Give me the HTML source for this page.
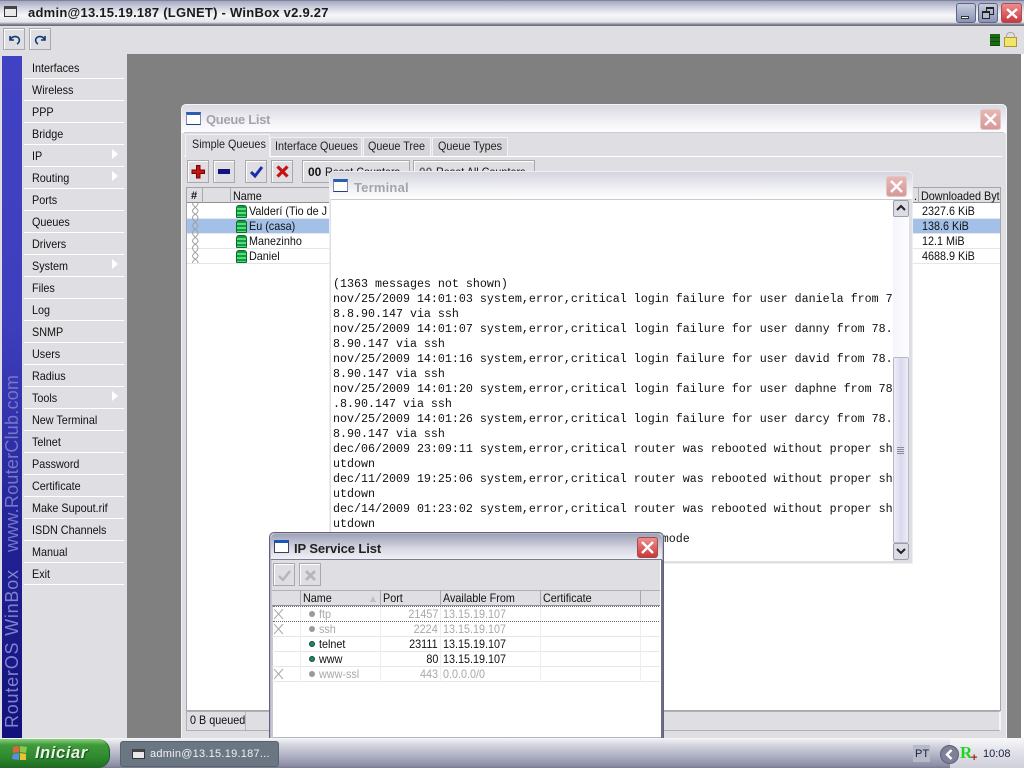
<!DOCTYPE html>
<html><head><meta charset="utf-8"><title>WinBox</title>
<style>
html,body{margin:0;padding:0;width:1024px;height:768px;overflow:hidden;background:#fff}
*{box-sizing:border-box}
body{font-family:"Liberation Sans",sans-serif;font-size:12px;color:#111;position:relative}
.a,.a *{position:absolute}
.a{position:absolute}
.t{white-space:nowrap;line-height:15px;height:15px;font-size:12px;transform:scaleX(.9);transform-origin:0 50%}
.r{transform-origin:100% 50%}
.n{transform:none}
.q{margin-top:1px}
.m{left:32px;white-space:nowrap;font-size:12px;line-height:14px;color:#111;transform:scaleX(.9);transform-origin:0 50%}
.sep{left:24px;width:100px;height:1px;background:#fff}
.arr{left:112px;width:0;height:0;border-left:6px solid #fff;border-top:5px solid transparent;border-bottom:5px solid transparent}
.btn{background:#dfdfe3;border:1px solid #a9a9ad;box-shadow:inset 1px 1px 0 #fff}
.tab{background:#d6d6da;border:1px solid #f2f2f4;border-bottom:0}
.x{border-radius:3px;border:1px solid #fff}
.mono{font-family:"Liberation Mono",monospace;font-size:11.67px;line-height:15px;height:15px;left:333px;margin-top:1px;white-space:pre;color:#111}
.row{height:1px;background:#e6e6e6}
.ic{width:11px;height:13px;background:repeating-linear-gradient(#119944 0 2px,#55dd77 2px 4px);border:1px solid #0a6a2a;border-radius:3px 3px 1px 1px}
.dot{width:6px;height:6px;border-radius:50%}
</style></head><body>

<!-- title bar -->
<div class="a" style="left:0;top:0;width:1024px;height:26px;background:linear-gradient(#5d6188 0,#a4a7bd 1px,#d2d4e0 8px,#f6f6fa 15px,#e4e5ec 22px,#6e7080 25px)"></div>
<div class="a" style="left:4px;top:6px;width:13px;height:11px;background:#e8e8e8;border:1px solid #333;border-top:3px solid #444"></div>
<div class="a" style="left:28px;top:5px;font-size:13px;font-weight:bold;line-height:16px;color:#1a1a1a;white-space:nowrap;letter-spacing:.25px">admin@13.15.19.187 (LGNET) - WinBox v2.9.27</div>
<div class="a" style="left:956px;top:3px;width:20px;height:20px;border-radius:3px;background:linear-gradient(#c7cde0,#8b93b4);border:1px solid #5d6585"><div style="left:4px;top:12px;width:8px;height:3px;background:#fff;border:1px solid #333"></div></div>
<div class="a" style="left:978px;top:3px;width:20px;height:20px;border-radius:3px;background:linear-gradient(#c7cde0,#8b93b4);border:1px solid #5d6585"><div style="left:7px;top:3px;width:8px;height:8px;border:1px solid #222;border-top-width:2px"></div><div style="left:3px;top:7px;width:8px;height:8px;border:1px solid #222;border-top-width:2px;background:#b5bbd0"></div></div>
<div class="a" style="left:1001px;top:3px;width:21px;height:20px;border-radius:3px;background:linear-gradient(#ef8d8d,#c8383f);border:1px solid #a84d50"><svg style="left:3px;top:3px" width="14" height="13"><path d="M2 2L12 11M12 2L2 11" stroke="#fff" stroke-width="2.4"/></svg></div>

<!-- toolbar -->
<div class="a" style="left:0;top:26px;width:1024px;height:28px;background:#dfdfe3"></div>
<div class="a btn" style="left:3px;top:28px;width:22px;height:22px"><svg style="left:3px;top:3px" width="15" height="15"><path d="M3 4v4h4M3.500 7.500C5 4 10 3.500 12 6.500C13 8.500 12 11 10 12" fill="none" stroke="#123a6e" stroke-width="1.600"/></svg></div>
<div class="a btn" style="left:29px;top:28px;width:22px;height:22px"><svg style="left:3px;top:3px" width="15" height="15"><path d="M12 4v4h-4M11.500 7.500C10 4 5 3.500 3 6.500C2 8.500 3 11 5 12" fill="none" stroke="#123a6e" stroke-width="1.600"/></svg></div>
<div class="a" style="left:990px;top:34px;width:10px;height:12px;background:repeating-linear-gradient(#1d6a14 0 3px,#0f4a0c 3px 4px)"></div>
<div class="a" style="left:1004px;top:37px;width:13px;height:10px;background:#f2e46a;border:1px solid #a89a30"></div>
<div class="a" style="left:1006px;top:32px;width:9px;height:6px;border:1px solid #a8a8a0;border-bottom:0;border-radius:4px 4px 0 0"></div>

<!-- sidebar -->
<div class="a" style="left:0;top:54px;width:127px;height:684px;background:#dfdfe3"></div>
<div class="a" style="left:2px;top:56px;width:20px;height:682px;background:linear-gradient(#4141c3 0,#3e3ebd 40%,#222296 70%,#12127c 100%)"></div>
<svg class="a" style="left:2px;top:56px" width="20" height="682"><text transform="translate(16,672) rotate(-90)" font-family="Liberation Sans" font-size="18" fill="#8282cc" textLength="158">RouterOS WinBox</text><text transform="translate(16,496) rotate(-90)" font-family="Liberation Sans" font-size="18" fill="#7777c8" textLength="177">www.RouterClub.com</text></svg>

<div class="a m" style="top:61px">Interfaces</div><div class="a sep" style="top:78px"></div>
<div class="a m" style="top:83px">Wireless</div><div class="a sep" style="top:100px"></div>
<div class="a m" style="top:105px">PPP</div><div class="a sep" style="top:122px"></div>
<div class="a m" style="top:127px">Bridge</div><div class="a sep" style="top:144px"></div>
<div class="a m" style="top:149px">IP</div><div class="a sep" style="top:166px"></div><div class="a arr" style="top:149px"></div>
<div class="a m" style="top:171px">Routing</div><div class="a sep" style="top:188px"></div><div class="a arr" style="top:171px"></div>
<div class="a m" style="top:193px">Ports</div><div class="a sep" style="top:210px"></div>
<div class="a m" style="top:215px">Queues</div><div class="a sep" style="top:232px"></div>
<div class="a m" style="top:237px">Drivers</div><div class="a sep" style="top:254px"></div>
<div class="a m" style="top:259px">System</div><div class="a sep" style="top:276px"></div><div class="a arr" style="top:259px"></div>
<div class="a m" style="top:281px">Files</div><div class="a sep" style="top:298px"></div>
<div class="a m" style="top:303px">Log</div><div class="a sep" style="top:320px"></div>
<div class="a m" style="top:325px">SNMP</div><div class="a sep" style="top:342px"></div>
<div class="a m" style="top:347px">Users</div><div class="a sep" style="top:364px"></div>
<div class="a m" style="top:369px">Radius</div><div class="a sep" style="top:386px"></div>
<div class="a m" style="top:391px">Tools</div><div class="a sep" style="top:408px"></div><div class="a arr" style="top:391px"></div>
<div class="a m" style="top:413px">New Terminal</div><div class="a sep" style="top:430px"></div>
<div class="a m" style="top:435px">Telnet</div><div class="a sep" style="top:452px"></div>
<div class="a m" style="top:457px">Password</div><div class="a sep" style="top:474px"></div>
<div class="a m" style="top:479px">Certificate</div><div class="a sep" style="top:496px"></div>
<div class="a m" style="top:501px">Make Supout.rif</div><div class="a sep" style="top:518px"></div>
<div class="a m" style="top:523px">ISDN Channels</div><div class="a sep" style="top:540px"></div>
<div class="a m" style="top:545px">Manual</div><div class="a sep" style="top:562px"></div>
<div class="a m" style="top:567px">Exit</div><div class="a sep" style="top:584px"></div>

<!-- MDI -->
<div class="a" style="left:127px;top:54px;width:897px;height:684px;background:#808080"></div>
<div class="a" style="left:1021px;top:54px;width:3px;height:684px;background:#fff"></div>

<!-- Queue window -->
<div class="a" style="left:181px;top:104px;width:826px;height:640px;background:#dfdfe3;border:1px solid #f4f4f6;border-radius:5px 5px 0 0">
  <div style="left:0;top:0;width:824px;height:28px;border-radius:5px 5px 0 0;background:linear-gradient(#d9dae2,#f6f6fa 70%,#fff)"></div>
</div>
<div class="a" style="left:186px;top:112px;width:15px;height:13px;background:#fff;border:1px solid #7a8ab4;border-top:3px solid #2a5fb0;border-bottom-color:#27407a"></div>
<div class="a" style="left:206px;top:112px;font-size:13px;font-weight:bold;color:#a3a3ab;line-height:16px;letter-spacing:-.3px">Queue List</div>
<div class="a x" style="left:980px;top:109px;width:21px;height:21px;background:linear-gradient(#e9b6b4,#d49a98);border-color:#e0c8c8"><svg style="left:2px;top:2px" width="15" height="15"><path d="M2 2L13 13M13 2L2 13" stroke="#fff" stroke-width="2.400"/></svg></div>

<div class="a" style="left:184px;top:132px;width:820px;height:1px;background:#c9c9cf"></div>
<div class="a tab" style="left:270px;top:137px;width:92px;height:20px"></div>
<div class="a tab" style="left:363px;top:137px;width:68px;height:20px"></div>
<div class="a tab" style="left:432px;top:137px;width:76px;height:20px"></div>
<div class="a" style="left:184px;top:156px;width:818px;height:1px;background:#fff"></div>
<div class="a tab" style="left:185px;top:134px;width:85px;height:23px;background:#dfdfe3"></div>
<div class="a t" style="left:192px;top:137px;color:#222">Simple Queues</div>
<div class="a t" style="left:275px;top:139px;color:#222">Interface Queues</div>
<div class="a t" style="left:368px;top:139px;color:#222">Queue Tree</div>
<div class="a t" style="left:438px;top:139px;color:#222">Queue Types</div>

<div class="a btn" style="left:187px;top:160px;width:22px;height:23px"><svg style="left:3px;top:3px" width="15" height="15"><path d="M5.500 1.500h3.500v4.500h4.500v3.500h-4.500v4.500h-3.500v-4.500h-4.500v-3.500h4.500z" fill="#c41414" stroke="#7a0000"/></svg></div>
<div class="a btn" style="left:213px;top:160px;width:22px;height:23px"><div style="left:4px;top:8px;width:12px;height:5px;background:#14147e"></div></div>
<div class="a btn" style="left:245px;top:160px;width:22px;height:23px"><svg style="left:3px;top:3px" width="15" height="15"><path d="M2 8L6 12L13 3" fill="none" stroke="#1a2ea8" stroke-width="3"/></svg></div>
<div class="a btn" style="left:271px;top:160px;width:22px;height:23px"><svg style="left:3px;top:3px" width="15" height="15"><path d="M2.500 2.500L12.500 12.500M12.500 2.500L2.500 12.500" stroke="#c41414" stroke-width="3.200"/></svg></div>
<div class="a btn" style="left:302px;top:160px;width:108px;height:23px"><div class="t n" style="left:5px;top:4px;font-weight:bold;font-size:12px">00</div><div class="t" style="left:22px;top:4px">Reset Counters</div></div>
<div class="a btn" style="left:413px;top:160px;width:122px;height:23px"><div class="t n" style="left:5px;top:4px;font-weight:bold;font-size:12px;color:#666">00</div><div class="t" style="left:22px;top:4px">Reset All Counters</div></div>

<!-- queue table -->
<div class="a" style="left:186px;top:187px;width:815px;height:524px;background:#fff;border:1px solid #a5a5ab"></div>
<div class="a" style="left:187px;top:188px;width:813px;height:15px;background:#dfdfe3;border-bottom:1px solid #8f8f95"></div>
<div class="a" style="left:202px;top:188px;width:1px;height:15px;background:#a8a8ae"></div>
<div class="a" style="left:230px;top:188px;width:1px;height:15px;background:#a8a8ae"></div>
<div class="a" style="left:918px;top:188px;width:1px;height:15px;background:#a8a8ae"></div>
<div class="a t q n" style="left:191px;top:188px;font-weight:bold;font-size:11px">#</div>
<div class="a t q" style="left:233px;top:188px">Name</div>
<div class="a t q" style="left:914px;top:188px">.</div>
<div class="a t q" style="left:921px;top:188px;width:87px;overflow:hidden">Downloaded Bytes</div>

<div class="a" style="left:187px;top:219px;width:813px;height:14px;background:#a3c1e8"></div>
<div class="a row" style="left:187px;top:218px;width:813px"></div>
<div class="a row" style="left:187px;top:233px;width:813px"></div>
<div class="a row" style="left:187px;top:248px;width:813px"></div>
<div class="a row" style="left:187px;top:263px;width:813px"></div>
<svg class="a" style="left:191px;top:203px" width="9" height="60"><path d="M1.500 0C1.500 4 7 5 7 8C7 11 1.500 11 1.500 15C1.500 19 7 20 7 23C7 26 1.500 26 1.500 30C1.500 34 7 35 7 38C7 41 1.500 41 1.500 45C1.500 49 7 50 7 53C7 56 1.500 56 1.500 60M7 0C7 4 1.500 5 1.500 8C1.500 11 7 11 7 15C7 19 1.500 20 1.500 23C1.500 26 7 26 7 30C7 34 1.500 35 1.500 38C1.500 41 7 41 7 45C7 49 1.500 50 1.500 53C1.500 56 7 56 7 60" fill="none" stroke="#a0a0a0"/></svg>
<div class="a ic" style="left:236px;top:205px"></div><div class="a ic" style="left:236px;top:220px"></div><div class="a ic" style="left:236px;top:235px"></div><div class="a ic" style="left:236px;top:250px"></div>
<div class="a t q" style="left:249px;top:203px">Valderí (Tio de J</div>
<div class="a t q" style="left:249px;top:218px">Eu (casa)</div>
<div class="a t q" style="left:249px;top:233px">Manezinho</div>
<div class="a t q" style="left:249px;top:248px">Daniel</div>
<div class="a t q" style="left:922px;top:203px">2327.6 KiB</div>
<div class="a t q" style="left:922px;top:218px">138.6 KiB</div>
<div class="a t q" style="left:922px;top:233px">12.1 MiB</div>
<div class="a t q" style="left:922px;top:248px">4688.9 KiB</div>

<!-- queue status -->
<div class="a" style="left:186px;top:711px;width:815px;height:20px;background:#dfdfe3;border:1px solid #b0b0b6;border-right:2px solid #f4f4f6"></div>
<div class="a t" style="left:190px;top:713px">0 B queued</div>
<div class="a" style="left:245px;top:712px;width:1px;height:18px;background:#b8b8be"></div>

<!-- Terminal -->
<div class="a" style="left:329px;top:171px;width:584px;height:393px;background:#dfdfe3;border:1px solid #eeeef0;border-radius:5px 5px 0 0">
  <div style="left:0;top:0;width:582px;height:27px;border-radius:5px 5px 0 0;background:linear-gradient(#d4d5de,#f4f4f8 70%,#fff)"></div>
  <div style="left:1px;top:27px;width:580px;height:1px;background:#c9c9cf"></div>
  <div style="left:1px;top:28px;width:562px;height:361px;background:#fff"></div>
</div>
<div class="a" style="left:333px;top:179px;width:15px;height:13px;background:#fff;border:1px solid #7a8ab4;border-top:3px solid #2a5fb0;border-bottom-color:#27407a"></div>
<div class="a" style="left:354px;top:180px;font-size:13px;font-weight:bold;color:#a3a3ab;line-height:16px;letter-spacing:.2px">Terminal</div>
<div class="a x" style="left:886px;top:176px;width:21px;height:21px;background:linear-gradient(#e9b6b4,#d49a98);border-color:#e0c8c8"><svg style="left:2px;top:2px" width="15" height="15"><path d="M2 2L13 13M13 2L2 13" stroke="#fff" stroke-width="2.400"/></svg></div>

<div class="a mono" style="top:276px">(1363 messages not shown)</div>
<div class="a mono" style="top:291px">nov/25/2009 14:01:03 system,error,critical login failure for user daniela from 7</div>
<div class="a mono" style="top:306px">8.8.90.147 via ssh</div>
<div class="a mono" style="top:321px">nov/25/2009 14:01:07 system,error,critical login failure for user danny from 78.</div>
<div class="a mono" style="top:336px">8.90.147 via ssh</div>
<div class="a mono" style="top:351px">nov/25/2009 14:01:16 system,error,critical login failure for user david from 78.</div>
<div class="a mono" style="top:366px">8.90.147 via ssh</div>
<div class="a mono" style="top:381px">nov/25/2009 14:01:20 system,error,critical login failure for user daphne from 78</div>
<div class="a mono" style="top:396px">.8.90.147 via ssh</div>
<div class="a mono" style="top:411px">nov/25/2009 14:01:26 system,error,critical login failure for user darcy from 78.</div>
<div class="a mono" style="top:426px">8.90.147 via ssh</div>
<div class="a mono" style="top:441px">dec/06/2009 23:09:11 system,error,critical router was rebooted without proper sh</div>
<div class="a mono" style="top:456px">utdown</div>
<div class="a mono" style="top:471px">dec/11/2009 19:25:06 system,error,critical router was rebooted without proper sh</div>
<div class="a mono" style="top:486px">utdown</div>
<div class="a mono" style="top:501px">dec/14/2009 01:23:02 system,error,critical router was rebooted without proper sh</div>
<div class="a mono" style="top:516px">utdown</div>
<div class="a mono" style="top:531px">                                               mode</div>

<!-- terminal scrollbar -->
<div class="a" style="left:893px;top:200px;width:16px;height:360px;background:linear-gradient(90deg,#f4f5fb,#fdfdff)"></div>
<div class="a" style="left:893px;top:200px;width:16px;height:17px;background:#dcdce6;border:1px solid #9d9da8;border-radius:2px"><svg style="left:2px;top:3px" width="10" height="9"><path d="M1 6L5 2L9 6" fill="none" stroke="#222" stroke-width="2"/></svg></div>
<div class="a" style="left:893px;top:357px;width:16px;height:186px;background:linear-gradient(90deg,#eeeef8,#d8d9ee 50%,#eeeef6);border:1px solid #b8b8c4;border-radius:2px"></div>
<div class="a" style="left:897px;top:447px;width:7px;height:8px;background:repeating-linear-gradient(#8a8a9a 0 1px,transparent 1px 2px)"></div>
<div class="a" style="left:893px;top:543px;width:16px;height:17px;background:#dcdce6;border:1px solid #9d9da8;border-radius:2px"><svg style="left:2px;top:3px" width="10" height="9"><path d="M1 2L5 6L9 2" fill="none" stroke="#222" stroke-width="2"/></svg></div>

<!-- IP Service List -->
<div class="a" style="left:269px;top:532px;width:395px;height:206px;background:#fff;border:1px solid #5e6280;border-bottom:0;border-radius:5px 5px 0 0;box-shadow:inset 0 0 0 1px #b4b6c6">
  <div style="left:1px;top:1px;width:391px;height:25px;border-radius:4px 4px 0 0;background:linear-gradient(#9fa2b8,#d8d9e4 60%,#f0f0f6)"></div>
  <div style="left:1px;top:26px;width:391px;height:1px;background:#7a7c90"></div>
  <div style="left:1px;top:27px;width:2px;height:178px;background:#c8c8d0"></div>
  <div style="left:391px;top:27px;width:2px;height:178px;background:#6e7084"></div>
</div>
<div class="a" style="left:274px;top:540px;width:15px;height:13px;background:#fff;border:1px solid #39415e;border-top:3px solid #1a56b8"></div>
<div class="a" style="left:294px;top:541px;font-size:13px;font-weight:bold;color:#222;line-height:16px;letter-spacing:-.1px">IP Service List</div>
<div class="a x" style="left:637px;top:537px;width:21px;height:21px;background:linear-gradient(#ee8f8c,#c9393c);border-color:#a8484c"><svg style="left:2px;top:2px" width="15" height="15"><path d="M2 2L13 13M13 2L2 13" stroke="#fff" stroke-width="2.400"/></svg></div>

<div class="a" style="left:272px;top:560px;width:388px;height:30px;background:#dfdfe3"></div>
<div class="a btn" style="left:273px;top:563px;width:22px;height:23px"><svg style="left:3px;top:4px" width="15" height="15"><path d="M2 8L6 12L13 3" fill="none" stroke="#b5b5bb" stroke-width="2.400"/></svg></div>
<div class="a btn" style="left:299px;top:563px;width:22px;height:23px"><svg style="left:3px;top:4px" width="15" height="15"><path d="M3 3L12 12M12 3L3 12" stroke="#b5b5bb" stroke-width="2.800"/></svg></div>

<div class="a" style="left:272px;top:590px;width:388px;height:16px;background:#dfdfe3;border-bottom:1px solid #8f8f95;border-top:1px solid #b0b0b6"></div>
<div class="a" style="left:300px;top:590px;width:1px;height:16px;background:#a8a8ae"></div>
<div class="a" style="left:380px;top:590px;width:1px;height:16px;background:#a8a8ae"></div>
<div class="a" style="left:440px;top:590px;width:1px;height:16px;background:#a8a8ae"></div>
<div class="a" style="left:540px;top:590px;width:1px;height:16px;background:#a8a8ae"></div>
<div class="a" style="left:640px;top:590px;width:1px;height:16px;background:#a8a8ae"></div>
<div class="a t" style="left:303px;top:591px">Name</div>
<div class="a" style="left:370px;top:596px;width:0;height:0;border-left:3px solid transparent;border-right:3px solid transparent;border-bottom:6px solid #c0c0c4"></div>
<div class="a t" style="left:383px;top:591px">Port</div>
<div class="a t" style="left:443px;top:591px">Available From</div>
<div class="a t" style="left:543px;top:591px">Certificate</div>

<div class="a row" style="left:272px;top:636px;width:388px"></div>
<div class="a row" style="left:272px;top:651px;width:388px"></div>
<div class="a row" style="left:272px;top:666px;width:388px"></div>
<div class="a row" style="left:272px;top:681px;width:388px"></div>
<div class="a" style="left:300px;top:606px;width:1px;height:76px;background:#eee"></div>
<div class="a" style="left:380px;top:606px;width:1px;height:76px;background:#eee"></div>
<div class="a" style="left:440px;top:606px;width:1px;height:76px;background:#eee"></div>
<div class="a" style="left:540px;top:606px;width:1px;height:76px;background:#eee"></div>
<div class="a" style="left:640px;top:606px;width:1px;height:76px;background:#eee"></div>
<div class="a" style="left:273px;top:606px;width:386px;height:16px;border-top:1px dotted #666;border-bottom:1px dotted #666"></div>

<svg class="a" style="left:274px;top:609px" width="10" height="72"><path d="M0 0L9 10M9 0L0 10M0 15L9 25M9 15L0 25M0 60L9 70M9 60L0 70" stroke="#a8a8a8" fill="none"/></svg>
<div class="a dot" style="left:309px;top:611px;background:#9a9a9a"></div>
<div class="a dot" style="left:309px;top:626px;background:#9a9a9a"></div>
<div class="a dot" style="left:309px;top:641px;background:#1f8a5c;border:1px solid #0d4a30"></div>
<div class="a dot" style="left:309px;top:656px;background:#1f8a5c;border:1px solid #0d4a30"></div>
<div class="a dot" style="left:309px;top:671px;background:#9a9a9a"></div>

<div class="a t" style="left:319px;top:607px;color:#a8a8a8">ftp</div>
<div class="a t" style="left:319px;top:622px;color:#a8a8a8">ssh</div>
<div class="a t" style="left:319px;top:637px">telnet</div>
<div class="a t" style="left:319px;top:652px">www</div>
<div class="a t" style="left:319px;top:667px;color:#a8a8a8">www-ssl</div>

<div class="a t r" style="right:586px;top:607px;color:#a8a8a8">21457</div>
<div class="a t r" style="right:586px;top:622px;color:#a8a8a8">2224</div>
<div class="a t r" style="right:586px;top:637px">23111</div>
<div class="a t r" style="right:586px;top:652px">80</div>
<div class="a t r" style="right:586px;top:667px;color:#a8a8a8">443</div>

<div class="a t" style="left:443px;top:607px;color:#a8a8a8">13.15.19.107</div>
<div class="a t" style="left:443px;top:622px;color:#a8a8a8">13.15.19.107</div>
<div class="a t" style="left:443px;top:637px">13.15.19.107</div>
<div class="a t" style="left:443px;top:652px">13.15.19.107</div>
<div class="a t" style="left:443px;top:667px;color:#a8a8a8">0.0.0.0/0</div>

<!-- taskbar -->
<div class="a" style="left:0;top:738px;width:1024px;height:30px;background:linear-gradient(#f6f6f8 0,#d8d9e2 6px,#a7a9bd 20px,#8a8ca6 28px,#777a8c 30px)"></div>
<div class="a" style="left:950px;top:738px;width:74px;height:30px;background:linear-gradient(#f8f8fa,#e4e4ec 40%,#d0d0dc)"></div>
<div class="a" style="left:0;top:739px;width:110px;height:29px;border-radius:0 12px 12px 0;background:linear-gradient(#8cd07e 0,#3f9a3a 6px,#2f8a30 18px,#1e6a20 29px);border-right:1px solid #1a5a1e"></div>
<svg class="a" style="left:11px;top:744px" width="18" height="18"><path d="M2 3L8 2L8 8L2 9z" fill="#e8603c"/><path d="M9 2L16 3L15 9L9 8z" fill="#8cc84c"/><path d="M2 10L8 9L8 16L1 15z" fill="#5a90e0"/><path d="M9 9L15 10L15 16L9 16z" fill="#f0c030"/></svg>
<div class="a" style="left:35px;top:744px;font-size:16.500px;font-weight:bold;font-style:italic;color:#e8f4e8;line-height:19px;letter-spacing:.6px;text-shadow:1px 1px 1px #1a4a1a">Iniciar</div>

<div class="a" style="left:120px;top:741px;width:159px;height:26px;background:#6b7683;border-radius:3px;border:1px solid #596370"></div>
<div class="a" style="left:132px;top:749px;width:13px;height:10px;background:#e8e8e8;border:1px solid #333;border-top:3px solid #444"></div>
<div class="a" style="left:150px;top:747px;font-size:11px;line-height:15px;color:#f0f0f4;white-space:nowrap;letter-spacing:.25px">admin@13.15.19.187...</div>

<div class="a" style="left:913px;top:745px;width:17px;height:17px;background:#b9bac8"></div>
<div class="a" style="left:915px;top:747px;font-size:11px;line-height:14px;color:#1a2040">PT</div>
<div class="a" style="left:940px;top:745px;width:19px;height:19px;border-radius:50%;background:#7d8098;border:1px solid #5c5f78"><svg style="left:2px;top:2px" width="13" height="13"><path d="M8.500 2L4 6.500L8.500 11" fill="none" stroke="#fff" stroke-width="2.400"/></svg></div>
<div class="a" style="left:960px;top:743px;font-family:'Liberation Serif',serif;font-weight:bold;font-size:17px;line-height:19px;color:#22d422">R</div>
<div class="a" style="left:971px;top:751px;font-size:11px;line-height:14px;font-weight:bold;color:#b02020">+</div>
<div class="a" style="left:983px;top:747px;font-size:11px;line-height:14px;color:#1a2040">10:08</div>

</body></html>
